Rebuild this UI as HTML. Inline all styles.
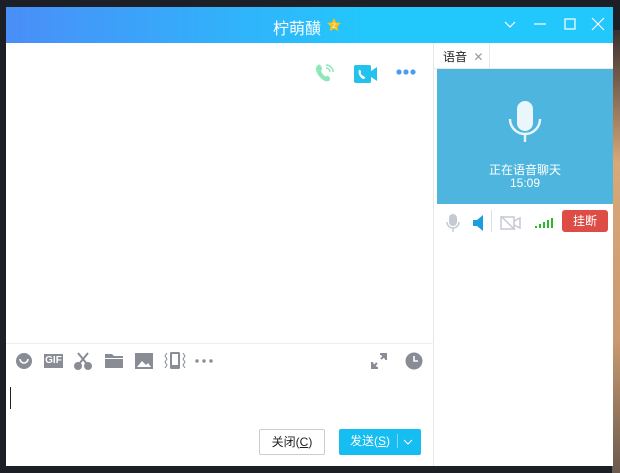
<!DOCTYPE html>
<html><head><meta charset="utf-8"><style>
*{margin:0;padding:0;box-sizing:border-box}
body{width:620px;height:473px;overflow:hidden;background:#1c1f26;font-family:"Liberation Sans","Noto Sans CJK SC",sans-serif;position:relative}
.photo{position:absolute;left:612px;top:30px;width:8px;height:443px;background:linear-gradient(#3a3030,#d9a878 30%,#c99a70 70%,#6a5a50)}
.win{position:absolute;left:6px;top:7px;width:607px;height:459px;background:#fff;overflow:hidden}
.title{height:36px;background:linear-gradient(90deg,#4a8ef8,#22c8fc 60%);position:relative;color:#fff}
.title .t{position:absolute;left:267px;top:8px;font-size:16px}
.star{position:absolute;left:320px;top:10px;width:16px;height:16px}
.ctl{position:absolute;top:10px;stroke:#fff;stroke-width:1.2;fill:none}
.left{position:absolute;left:0;top:36px;width:428px;height:423px;border-right:1px solid #e6e6e6}
.tb{position:absolute;left:0;top:300px;width:428px;border-top:1px solid #eee}
.ic{position:absolute;fill:#8a8c95}
.btn{position:absolute;top:422px;height:26px;font-size:12px;line-height:24px;text-align:center;border-radius:2px}
.tab{position:absolute;left:434px;top:43px;width:56px;height:26px;border-right:1px solid #e8e8e8;border-bottom:1px solid #e8e8e8;font-size:12px;padding:5px 0 0 9px;color:#222}
.tabline{position:absolute;left:490px;top:68px;width:123px;border-top:1px solid #e8e8e8}
.blue{position:absolute;left:437px;top:69px;width:176px;height:135px;background:#4eb6de;color:#fff;text-align:center;font-size:12px}
.hang{position:absolute;left:562px;top:210px;width:46px;height:22px;background:#dd4d45;border-radius:3px;color:#fff;font-size:12px;line-height:22px;text-align:center}
</style></head><body>
<div class="photo"></div>
<div class="win">
 <div class="title"><span class="t">柠萌䤑</span>
  <svg class="star" viewBox="0 0 16 16"><path d="M8 1l2.1 4.4 4.8.6-3.5 3.3.9 4.8L8 11.8 3.7 14.1l.9-4.8L1.1 6l4.8-.6z" fill="#f7c21c"/><text x="8" y="11" font-size="6" fill="#fff" text-anchor="middle">Z</text></svg>
  <svg class="ctl" style="left:497px" width="14" height="14"><path d="M2 5l5 5 5-5"/></svg>
  <svg class="ctl" style="left:527px" width="14" height="14"><path d="M1 7h12"/></svg>
  <svg class="ctl" style="left:557px" width="14" height="14"><rect x="2" y="2" width="10" height="10"/></svg>
  <svg class="ctl" style="left:585px" width="14" height="14"><path d="M1 1l12 12M13 1L1 13"/></svg>
 </div>
 <div class="left">
  <svg style="position:absolute;left:308px;top:19px" width="22" height="22" viewBox="0 0 22 22"><path d="M4 3c2-2 4 2 4 4s-2 1 0 4 4 4 5 3 3 1 3 3-2 3-5 2S2 12 2 7c0-2 1-3 2-4z" fill="#8de8b8"/><path d="M12 3a7 7 0 0 1 7 7M12 6a4 4 0 0 1 4 4" stroke="#8de8b8" stroke-width="1.5" fill="none"/></svg>
  <svg style="position:absolute;left:348px;top:22px" width="24" height="18" viewBox="0 0 24 18"><rect x="0" y="0" width="17" height="18" rx="2" fill="#22c2ee"/><path d="M17 6l6-4v14l-6-4z" fill="#22c2ee"/><path d="M5 5c1-1 2 1 2 2s-1 1 1 3 2 1 3 2-1 2-2 2S3 9 5 5z" fill="#fff"/></svg>
  <svg style="position:absolute;left:390px;top:26px" width="22" height="6" fill="#4a9cf0"><circle cx="3" cy="3" r="2.6"/><circle cx="10" cy="3" r="2.6"/><circle cx="17" cy="3" r="2.6"/></svg>
  <div class="tb"></div>
  <svg class="ic" style="left:9px;top:309px" width="18" height="18"><circle cx="9" cy="9" r="8"/><path d="M5 7a4 4 0 0 0 8 0" stroke="#fff" stroke-width="1.6" fill="none"/></svg>
  <div style="position:absolute;left:38px;top:311px;width:19px;height:14px;background:#8a8c95;color:#fff;font-size:10px;font-weight:bold;line-height:14px;text-align:center">GIF</div>
  <svg class="ic" style="left:68px;top:309px" width="18" height="18" stroke="#8a8c95" stroke-width="2" fill="none"><path d="M4 1l9 11M14 1L5 12"/><circle cx="4" cy="14" r="3"/><circle cx="14" cy="14" r="3"/></svg>
  <svg class="ic" style="left:99px;top:310px" width="18" height="16"><path d="M0 1h7l2 2h9v12H0z"/><rect x="0" y="5" width="18" height="1" fill="#fff"/></svg>
  <svg class="ic" style="left:129px;top:310px" width="18" height="16"><rect width="18" height="16"/><path d="M2 14l5-6 4 4 2-2 3 4z" fill="#fff"/></svg>
  <svg class="ic" style="left:157px;top:308px" width="24" height="20"><rect x="7" y="1" width="10" height="17" rx="1.5"/><rect x="9" y="3" width="6" height="11" fill="#fff"/><path d="M4 2l-2 3 2 3-2 3 2 3-2 3M20 2l2 3-2 3 2 3-2 3 2 3" stroke="#8a8c95" fill="none"/></svg>
  <svg class="ic" style="left:189px;top:316px" width="20" height="4"><circle cx="2" cy="2" r="1.7"/><circle cx="9" cy="2" r="1.7"/><circle cx="16" cy="2" r="1.7"/></svg>
  <svg class="ic" style="left:364px;top:309px" width="18" height="18" stroke="#8a8c95" stroke-width="2" fill="none"><path d="M2 16l5-5M16 2l-5 5M2 10v6h6M16 8V2h-6"/></svg>
  <svg class="ic" style="left:399px;top:309px" width="18" height="18"><circle cx="9" cy="9" r="8.5"/><path d="M9 4v5h4" stroke="#fff" stroke-width="1.6" fill="none"/></svg>
  <div style="position:absolute;left:4px;top:344px;width:1px;height:22px;background:#222"></div>
 </div>
 <div class="btn" style="left:253px;width:66px;border:1px solid #ccc;color:#222;top:422px">关闭(<u>C</u>)</div>
 <div class="btn" style="left:333px;width:82px;background:#16bdf0;color:#fff;text-align:left;padding-left:11px">发送(<u>S</u>)<span style="position:absolute;left:58px;top:5px;height:14px;border-left:1px solid #7fd8f6"></span><svg style="position:absolute;left:63px;top:9px" width="12" height="8" stroke="#fff" fill="none"><path d="M2 2l4 4 4-4"/></svg></div>
</div>
<div class="tab">语音 <span style="color:#999;margin-left:3px">✕</span></div>
<div class="tabline"></div>
<div class="blue">
 <svg style="position:absolute;left:68px;top:30px" width="40" height="48" viewBox="0 0 40 48"><rect x="12" y="2" width="16" height="30" rx="8" fill="#eaf6fc"/><path d="M5 20a15 15 0 0 0 30 0M20 35v8" stroke="#eaf6fc" stroke-width="2.4" fill="none"/></svg>
 <div style="position:absolute;top:92px;width:100%">正在语音聊天</div>
 <div style="position:absolute;top:107px;width:100%">15:09</div>
</div>
<svg style="position:absolute;left:446px;top:213px" width="14" height="20"><rect x="3" y="1" width="8" height="12" rx="4" fill="#c5cad2"/><path d="M1 9a6 6 0 0 0 12 0M7 15v4" stroke="#c5cad2" stroke-width="1.5" fill="none"/></svg>
<svg style="position:absolute;left:472px;top:214px" width="14" height="18"><path d="M1 6h4l6-5v16l-6-5H1z" fill="#1a9ede"/></svg>
<div style="position:absolute;left:491px;top:210px;height:22px;border-left:1px solid #e0e0e0"></div>
<svg style="position:absolute;left:500px;top:215px" width="22" height="16" stroke="#c5cad2" stroke-width="1.5" fill="none"><rect x="1" y="2" width="13" height="12"/><path d="M14 6l6-3v10l-6-3M1 1l14 14"/></svg>
<svg style="position:absolute;left:535px;top:217px" width="20" height="12" fill="#2cb82c"><rect x="0" y="9" width="2" height="2"/><rect x="4" y="7" width="2" height="4"/><rect x="8" y="5" width="2" height="6"/><rect x="12" y="3" width="2" height="8"/><rect x="16" y="1" width="2" height="10"/></svg>
<div class="hang">挂断</div>
</body></html>
